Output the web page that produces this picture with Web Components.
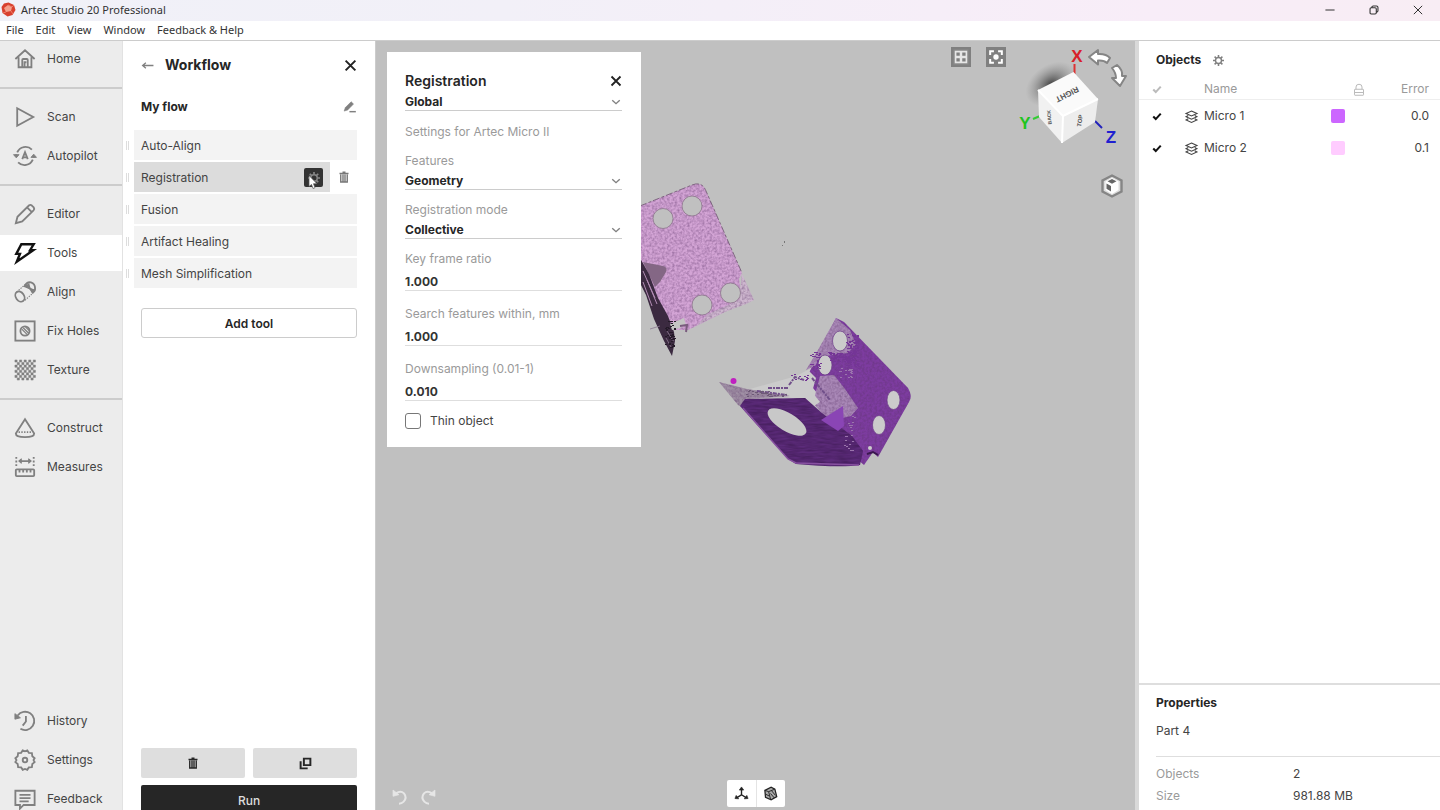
<!DOCTYPE html>
<html lang="en">
<head>
<meta charset="utf-8">
<title>Artec Studio 20 Professional</title>
<style>
    :root {
        --text: #444;
        --strong: #262626;
        --muted: #9a9a9a;
        --icon: #808080;
        --line: #dedede;
        --row: #f3f3f3;
        --row-active: #dcdcdc;
        --canvas: #c0c0c0;
        --ui-font: Inter, "Liberation Sans", sans-serif;
        --system-font: "Noto Sans", "Open Sans", sans-serif;
    }
    html, body {
        height: 100%;
        margin: 0;
        overflow: hidden;
        background: #fff;
        color: var(--text);
        font: 12px/16px var(--ui-font);
    }
</style>
</head>
<body>
<studio-app></studio-app>

<script>
const ICONS = {
    home: '<path d="M1.500 12 12 2.500 22.500 12M5 10v11h14V10M9 21v-8q0-1 1-1h4q1 0 1 1v8M11.500 21v-5.500h2"/>',
    scan: '<path d="M3.500 2.500v19L21 12Z"/>',
    autopilot: '<path d="M3.500 8a9.800 9.800 0 0 1 16-3M20.500 16a9.800 9.800 0 0 1-16 3M2.300 10v2M21.700 12v2"/><path d="m9 15.500 3-7.500 3 7.500M10 13.500h4"/><path d="m-.5 10.500 3 3.500 3-3.500ZM24.500 13.500l-3-3.500-3 3.500Z" fill="currentColor" stroke-width="1"/>',
    editor: '<path d="m2 22 1.800-7L16.500 2.500q1.500-1 3 .3l2 2q1.200 1.700-.2 3.200L9 20ZM14.500 5l4.700 4.700"/>',
    tools: '<path d="M8 2.500h13.500l-4 6.500h3.500L3 21.500l3.500-8.500H2.500Z" stroke-width="2.600"/>',
    align: '<ellipse cx="6.500" cy="17" rx="4.500" ry="6" transform="rotate(-35 6.500 17)"/><path d="M3 12 13 3M12 21l10-9" stroke-width="1.200" stroke-dasharray="1.500 1.300"/><path d="M12 5Q14 .8 18.500 1.500q4.500 1.500 4.500 6.500 0 3.500-2.500 4.500-1-3.500-4-5T12 5Z"/><path d="m12 6 4-2 1 4ZM18 9l4 1-2 2Z" fill="currentColor"/>',
    holes: '<rect x="1.500" y="1.500" width="21" height="21"/><circle cx="12" cy="12" r="5"/><path d="m8.500 10 6 6M10 8.500l6 6M12.500 7.500l4 4" stroke-width="1.400"/>',
    construct: '<path d="M12 2.500 2 18q0 4 10 4t10-4Z"/><path d="M5 16.500h14" stroke-dasharray="1.500 1.500"/>',
    measures: '<rect x="2" y="14.500" width="20" height="7.500" rx="1"/><path d="M6 15v3M10 15v3M14 15v3M18 15v3M5.500 5.500h13"/><path d="m8 3-3 2.500L8 8ZM16 3l3 2.500L16 8Z" fill="currentColor" stroke-width="1"/><path d="M2.500 1v11M21.500 1v11" stroke-dasharray="2 2"/>',
    history: '<path d="M4 6A10 10 0 1 1 7 20.500"/><path d="M1 4v6l6-1.500Z" fill="currentColor" stroke-width="1"/><path d="M13 6.500v6L9.500 17"/>',
    settings: '<path d="m9.500 1.500 2.500 1 2.500-1 1.700 2.700 3.300.3.500 3.500 2.500 2-1.200 2 1.200 2.300-2.500 2-.5 3.400-3.300.4-1.700 2.600-2.500-1-2.500 1-1.700-2.600-3.300-.4-.5-3.400-2.500-2L2.700 12 1.500 10 4 8l.5-3.500 3.300-.3Z"/><circle cx="12" cy="12" r="2.500"/>',
    feedback: '<path d="M1.500 3h21v15.500h-12L6.500 22.500v-4h-5Z"/><path d="M6 7.500h12M6 11h12M6 14.500h10"/>',
    close: '<path d="m3 3 18 18M21 3 3 21" stroke-width="3.600"/>',
    back: '<path d="M23 12H3M9 7l-6 5 6 5" stroke-width="2.400"/>',
    rename: '<path d="m2 19 2-6L14 3l4 4L8 17Z" fill="currentColor" stroke-width="1"/><path d="M11 20h11" stroke-width="2.500"/>',
    trash: '<path d="M3 5h18M9 2.500h6M5.500 7v15h13V7M10 7v14M14 7v14" stroke-width="2.800"/>',
    copy: '<path d="M9 3h12v12H9Z" stroke-width="3.600"/><path d="M3 8v13h13" stroke-width="3.600"/>',
    gear: '<circle cx="12" cy="12" r="6.500" stroke-width="3"/><path d="M12 0v5M12 19v5M0 12h5M19 12h5M3.500 3.500l3.500 3.500M17 17l3.500 3.500M3.500 20.500l3.500-3.500M17 7l3.500-3.500" stroke-width="3.400"/>',
    chevron: '<path d="m3 8 9 8 9-8" stroke-width="3.400"/>',
    tick: '<path d="m3 11 6 6L21 4" stroke-width="5"/>',
    lock: '<rect x="3" y="10.500" width="18" height="12" rx="1"/><path d="M6 10.500V6q0-5.500 6-5.500T18 6v4.500M3 17h18"/>',
    layers: '<path d="M12 2 22 6.500 12 11 2 6.500ZM6 10l-4 2.500L12 17l10-4.500L18 10M6 16l-4 2.500L12 23l10-4.500-4-2.500" stroke-width="2.100"/>',
    minimize: '<path d="M1 12h22" stroke-width="2.400"/>',
    restore: '<path d="M2.500 9q0-2.500 3-2.500h9q3 0 3 3v9q0 3-3 3h-9q-3 0-3-3ZM7 6V5q0-2.500 3-2.500h8q3.500 0 3.500 3.500v8q0 3-3 3" stroke-width="2.600"/>',
    exit: '<path d="m2 2 20 20M22 2 2 22" stroke-width="2.400"/>',
    grid: '<path d="M1.500 1.500h21v21h-21Z" fill="#8c8c8c" stroke="#808080" stroke-width="3"/><path d="M4.500 4.500h15v15h-15Z" fill="#e6e6e6" stroke="none"/><path d="M6.500 6.500h4v4h-4ZM13.500 6.500h4v4h-4ZM6.500 13.500h4v4h-4ZM13.500 13.500h4v4h-4Z" fill="#808080" stroke="none"/>',
    focus: '<path d="M1.500 1.500h21v21h-21Z" fill="#808080" stroke="#808080" stroke-width="3"/><path d="M5 9.500V5h4.500M14.500 5H19v4.500M19 14.500V19h-4.500M9.500 19H5v-4.500" stroke="#fff" stroke-width="2.400"/><circle cx="12" cy="12" r="3.200" fill="#fff" stroke="none"/>',
    viewcube: '<path d="m12 1.500 9.500 5v11L12 22.500l-9.500-5v-11Z" fill="#ddd" stroke="#858585" stroke-width="2.400"/><path d="m12 4 6.500 3.500v8.500L12 20l-6.500-4V7.500Z" fill="#fff" stroke="none"/><path d="m12 5 4.500 2.300-4.500 2.500-4.500-2.500ZM6.500 9.500l4.500 2.400v5.500l-4.500-2.700Z" fill="#666" stroke="none"/>',
    undo: '<path d="M6 6.500q7-5 12 0 5 6.500-.5 12.500-3 3-7 3" stroke-width="3"/><path d="M1.500 1.500v9.500l9-2.500Z" fill="currentColor" stroke-width="1"/>',
    axes: '<path d="M12 4v10l-8 5M12 14l8 5" stroke-width="2.200"/><path d="m8.500 6.500 3.500-5 3.500 5ZM1.500 20l2-5 4 5.500ZM22.500 20l-2-5-4 5.500Z" fill="currentColor" stroke-width="1"/>',
    mesh: '<path d="m3 7 10-5 6 3 3 12-9 5-9-4Z" fill="#aaa"/><path d="m3 7 6 2 3 12M9 9l10-4M12 12l6 7M14 8l6 7M4 13l6 3" stroke-width="1.500"/>'
};

class UiIcon extends HTMLElement {
    connectedCallback() {
        const size = this.getAttribute('size') || 20;
        const root = this.attachShadow({ mode: 'open' });
        root.innerHTML = `
            <style>
                :host { display: inline-flex; flex: none; }
                svg { display: block; }
            </style>
            <svg width="${size}" height="${size}" viewBox="0 0 24 24" fill="none" stroke="currentColor"
                stroke-width="2" overflow="visible" aria-hidden="true">${ICONS[this.getAttribute('name')]}</svg>
        `;
    }
}

class TitleBar extends HTMLElement {
    constructor() {
        super();
        this.attachShadow({ mode: 'open' }).innerHTML = `
            <style>
                :host {
                    display: flex;
                    align-items: center;
                    box-sizing: border-box;
                    height: 21px;
                    padding: 0 14px 2px 1px;
                    background: linear-gradient(90deg, #f0f1f8 0%, #f2f0f8 35%, #f8edf8 80%, #f8edf4 100%);
                    color: #333;
                    font: 11px/18px var(--system-font);
                }
                .name { flex: 1; padding-left: 5px; }
                .buttons { display: flex; gap: 28px; }
                button {
                    display: flex;
                    justify-content: center;
                    width: 16px;
                    padding: 0;
                    border: 0;
                    background: none;
                    color: #333;
                }
            </style>
            <svg width="15" height="15" viewBox="0 0 15 15" aria-hidden="true">
                <path d="M7.500.5 13 3l1.500 5-3 5-5 1.500L1.500 11 .5 5 3 1.500Z" fill="#d8412f"/>
                <path d="M7 3 11 5l-1 4-5 1-2-4Z" fill="#f4a08c"/>
                <path d="m7 3 4 2 2-2M5 10l-3 1M10 9l2 3" stroke="#ee7d68" fill="none"/>
            </svg>
            <span class="name"><slot></slot></span>
            <div class="buttons">
                <button aria-label="Minimize"><ui-icon name="minimize" size="10"></ui-icon></button>
                <button aria-label="Restore"><ui-icon name="restore" size="10"></ui-icon></button>
                <button aria-label="Close"><ui-icon name="exit" size="10"></ui-icon></button>
            </div>
        `;
    }
}

class MenuBar extends HTMLElement {
    constructor() {
        super();
        this.attachShadow({ mode: 'open' }).innerHTML = `
            <style>
                :host {
                    display: flex;
                    align-items: flex-start;
                    gap: 12px;
                    height: 19px;
                    padding: 0 6px;
                    border-bottom: 1px solid #ccc;
                    background: #fff;
                }
                button {
                    padding: 0;
                    border: 0;
                    background: none;
                    color: #333;
                    font: 11px/18px var(--system-font);
                }
            </style>
            <button>File</button>
            <button>Edit</button>
            <button>View</button>
            <button>Window</button>
            <button>Feedback &amp; Help</button>
        `;
    }
}

class NavItem extends HTMLElement {
    connectedCallback() {
        this.attachShadow({ mode: 'open' }).innerHTML = `
            <style>
                :host { display: block; }
                button {
                    display: flex;
                    align-items: center;
                    gap: 11px;
                    width: 100%;
                    height: 36px;
                    padding: 0 0 0 14px;
                    border: 0;
                    background: none;
                    color: var(--text);
                    font: inherit;
                }
                ui-icon { color: var(--icon); }
                :host([active]) button { background: #fff; }
                :host([active]) ui-icon { color: #111; }
            </style>
            <button><ui-icon name="${this.getAttribute('icon')}" size="22"></ui-icon><slot></slot></button>
        `;
    }
}

class SideNav extends HTMLElement {
    constructor() {
        super();
        this.attachShadow({ mode: 'open' }).innerHTML = `
            <style>
                :host {
                    display: flex;
                    flex-direction: column;
                    justify-content: space-between;
                    width: 122px;
                    padding-bottom: 9px;
                    border-right: 1px solid #e2e2e2;
                    background: #ececec;
                    flex: none;
                }
                nav { display: flex; flex-direction: column; gap: 3px; }
                hr {
                    width: 100%;
                    height: 2px;
                    margin: 7px 0;
                    border: 0;
                    background: #ccc;
                }
            </style>
            <nav>
                <nav-item icon="home">Home</nav-item>
                <hr>
                <nav-item icon="scan">Scan</nav-item>
                <nav-item icon="autopilot">Autopilot</nav-item>
                <hr>
                <nav-item icon="editor">Editor</nav-item>
                <nav-item icon="tools" active>Tools</nav-item>
                <nav-item icon="align">Align</nav-item>
                <nav-item icon="holes">Fix Holes</nav-item>
                <nav-item icon="texture">Texture</nav-item>
                <hr>
                <nav-item icon="construct">Construct</nav-item>
                <nav-item icon="measures">Measures</nav-item>
            </nav>
            <nav>
                <nav-item icon="history">History</nav-item>
                <nav-item icon="settings">Settings</nav-item>
                <nav-item icon="feedback">Feedback</nav-item>
            </nav>
        `;
    }
}

// One step of the flow; the active one shows its settings and delete buttons
class FlowStep extends HTMLElement {
    connectedCallback() {
        const active = this.hasAttribute('active');
        this.attachShadow({ mode: 'open' }).innerHTML = `
            <style>
                :host { display: flex; align-items: center; height: 30px; }
                .handle {
                    width: 1px;
                    height: 9px;
                    margin: 0 5px 0 3px;
                    border: solid #ddd;
                    border-width: 0 1px;
                }
                .body {
                    display: flex;
                    flex: 1;
                    align-items: center;
                    justify-content: space-between;
                    box-sizing: border-box;
                    height: 30px;
                    padding: 1px 7px 0;
                    background: var(--row);
                }
                :host([active]) .body { background: var(--row-active); }
                button {
                    display: grid;
                    place-items: center;
                    padding: 0;
                    border: 0;
                    background: none;
                    color: #777;
                }
                .gear {
                    position: relative;
                    width: 19px;
                    height: 19px;
                    border-radius: 2px;
                    background: #333;
                    color: #888;
                }
                .cursor { position: absolute; left: 4px; top: 7px; }
                .trash { width: 27px; }
            </style>
            <span class="handle"></span>
            <div class="body">
                <slot></slot>
                ${active ? `<button class="gear" aria-label="Step settings">
                    <ui-icon name="gear" size="12"></ui-icon>
                    <svg class="cursor" width="10" height="14" viewBox="0 0 10 14" aria-hidden="true">
                        <path d="M1 .5v11l2.500-2 1.500 4 2-.8-1.500-4H9Z" fill="#fff" stroke="#555" stroke-width=".7"/>
                    </svg>
                </button>` : ''}
            </div>
            ${active ? '<button class="trash" aria-label="Delete step"><ui-icon name="trash" size="12"></ui-icon></button>' : ''}
        `;
    }
}

class WorkflowPanel extends HTMLElement {
    constructor() {
        super();
        this.attachShadow({ mode: 'open' }).innerHTML = `
            <style>
                :host {
                    display: flex;
                    flex-direction: column;
                    flex: none;
                    width: 252px;
                    border-right: 1px solid #ccc;
                    background: #fff;
                }
                header, .flow {
                    display: flex;
                    align-items: center;
                    padding: 0 18px;
                }
                header { gap: 11px; height: 48px; }
                h1 {
                    flex: 1;
                    margin: 0;
                    color: var(--strong);
                    font-size: 14px;
                    font-weight: 700;
                }
                .flow { justify-content: space-between; height: 36px; }
                h2 {
                    margin: 0;
                    color: var(--strong);
                    font-size: 12px;
                    font-weight: 700;
                }
                button {
                    padding: 0;
                    border: 0;
                    background: none;
                    color: var(--strong);
                    font: inherit;
                }
                .plain { display: flex; color: var(--icon); }
                .plain.dark { color: #222; }
                .steps {
                    display: flex;
                    flex-direction: column;
                    gap: 2px;
                    padding: 5px 18px 20px 0;
                }
                .add {
                    height: 30px;
                    margin: 0 18px;
                    padding-top: 1px;
                    border: 1px solid #ccc;
                    border-radius: 3px;
                    font-weight: 600;
                }
                footer {
                    display: grid;
                    grid-template-columns: 1fr 1fr;
                    gap: 7px 8px;
                    margin-top: auto;
                    padding: 0 18px 11px;
                }
                footer button {
                    display: grid;
                    place-items: center;
                    height: 30px;
                    border-radius: 2px;
                    background: #dedede;
                }
                footer .run {
                    grid-column: span 2;
                    padding-top: 1px;
                    background: #262626;
                    color: #ddd;
                    font-weight: 500;
                }
            </style>
            <header>
                <button class="plain" aria-label="Back"><ui-icon name="back" size="13"></ui-icon></button>
                <h1>Workflow</h1>
                <button class="plain dark" aria-label="Close"><ui-icon name="close" size="13"></ui-icon></button>
            </header>
            <div class="flow">
                <h2>My flow</h2>
                <button class="plain" aria-label="Rename flow"><ui-icon name="rename" size="14"></ui-icon></button>
            </div>
            <div class="steps">
                <flow-step>Auto-Align</flow-step>
                <flow-step active>Registration</flow-step>
                <flow-step>Fusion</flow-step>
                <flow-step>Artifact Healing</flow-step>
                <flow-step>Mesh Simplification</flow-step>
            </div>
            <button class="add">Add tool</button>
            <footer>
                <button aria-label="Delete flow"><ui-icon name="trash" size="12"></ui-icon></button>
                <button aria-label="Duplicate flow"><ui-icon name="copy" size="13"></ui-icon></button>
                <button class="run">Run</button>
            </footer>
        `;
    }
}

class SelectField extends HTMLElement {
    connectedCallback() {
        const label = this.getAttribute('label');
        this.attachShadow({ mode: 'open' }).innerHTML = `
            <style>
                :host { display: block; }
                label { display: block; height: 20px; color: var(--muted); }
                .box {
                    display: grid;
                    align-items: center;
                    grid-template-columns: 1fr 11px;
                    border-bottom: 1px solid #ccc;
                }
                select {
                    grid-area: 1 / 1 / 2 / 3;
                    width: 100%;
                    height: 16px;
                    padding: 0;
                    border: 0;
                    appearance: none;
                    background: none;
                    color: var(--strong);
                    font: 700 12px/16px var(--ui-font);
                }
                ui-icon { grid-area: 1 / 2; color: var(--icon); pointer-events: none; }
            </style>
            ${label ? `<label for="value">${label}</label>` : ''}
            <div class="box">
                <select id="value" ${label ? '' : 'aria-label="Registration type"'}>
                    <option>${this.getAttribute('value')}</option>
                </select>
                <ui-icon name="chevron" size="10"></ui-icon>
            </div>
        `;
    }
}

class NumberField extends HTMLElement {
    connectedCallback() {
        this.attachShadow({ mode: 'open' }).innerHTML = `
            <style>
                :host { display: block; }
                label { display: block; height: 22px; color: var(--muted); }
                input {
                    display: block;
                    box-sizing: border-box;
                    width: 100%;
                    height: 18px;
                    padding: 0 0 1px;
                    border: 0;
                    border-bottom: 1px solid var(--line);
                    background: none;
                    color: #333;
                    font: 700 12px/16px var(--ui-font);
                }
            </style>
            <label for="value">${this.getAttribute('label')}</label>
            <input id="value" value="${this.getAttribute('value')}">
        `;
    }
}

class RegistrationDialog extends HTMLElement {
    constructor() {
        super();
        this.attachShadow({ mode: 'open' }).innerHTML = `
            <style>
                :host {
                    display: flex;
                    flex-direction: column;
                    box-sizing: border-box;
                    width: 254px;
                    padding: 19px 19px 18px 18px;
                    background: #fff;
                }
                header {
                    display: flex;
                    align-items: center;
                    justify-content: space-between;
                    margin-bottom: 3px;
                }
                h2 {
                    margin: 0;
                    color: var(--strong);
                    font-size: 14px;
                    line-height: 20px;
                    font-weight: 600;
                }
                button { display: flex; padding: 0; border: 0; background: none; color: #222; }
                p { margin: 13px 0; color: var(--muted); }
                .fields { display: flex; flex-direction: column; gap: 12px; }
                number-field + number-field { margin-top: 3px; }
                .check { display: flex; align-items: center; gap: 9px; }
                .check input {
                    width: 16px;
                    height: 16px;
                    margin: 0;
                    border: 1px solid #777;
                    border-radius: 3px;
                    appearance: none;
                    background: #fff;
                }
            </style>
            <header>
                <h2>Registration</h2>
                <button aria-label="Close"><ui-icon name="close" size="12"></ui-icon></button>
            </header>
            <select-field value="Global"></select-field>
            <p>Settings for Artec Micro II</p>
            <div class="fields">
                <select-field label="Features" value="Geometry"></select-field>
                <select-field label="Registration mode" value="Collective"></select-field>
                <number-field label="Key frame ratio" value="1.000"></number-field>
                <number-field label="Search features within, mm" value="1.000"></number-field>
                <number-field label="Downsampling (0.01-1)" value="0.010"></number-field>
                <div class="check">
                    <input type="checkbox" id="thin">
                    <label for="thin">Thin object</label>
                </div>
            </div>
        `;
    }
}

class ScanModel extends HTMLElement {
    constructor() {
        super();
        this.attachShadow({ mode: 'open' }).innerHTML = `
            <style>
                :host { display: block; }
                svg { display: block; }
            </style>
            <svg width="290" height="300" viewBox="640 170 290 300" role="img" aria-label="Scanned brackets">
                <defs>
                    <filter id="grain" x="0" y="0" width="1" height="1" color-interpolation-filters="sRGB">
                        <feTurbulence type="fractalNoise" baseFrequency=".4" numOctaves="2" seed="4" result="n"/>
                        <feColorMatrix in="n" values="0 0 0 0 .35  0 0 0 0 .2  0 0 0 0 .4  .8 0 0 0 -.28" result="d"/>
                        <feComposite in="d" in2="SourceGraphic" operator="in" result="g"/>
                        <feMerge><feMergeNode in="SourceGraphic"/><feMergeNode in="g"/></feMerge>
                    </filter>
                    <filter id="streak" x="0" y="0" width="1" height="1" color-interpolation-filters="sRGB">
                        <feTurbulence type="fractalNoise" baseFrequency=".08 .5" numOctaves="2" seed="8" result="n"/>
                        <feColorMatrix in="n" values="0 0 0 0 .2  0 0 0 0 .08  0 0 0 0 .27  .9 0 0 0 -.25" result="d"/>
                        <feComposite in="d" in2="SourceGraphic" operator="in" result="g"/>
                        <feMerge><feMergeNode in="SourceGraphic"/><feMergeNode in="g"/></feMerge>
                    </filter>
                </defs>

                <g filter="url(#grain)">
                    <path d="M640 206 692 185q10-4 14 6l36 82-3 6 4 24-55 27-14 0-34-60Z" fill="#d3a4d5"/>
                    <path d="m742 274 12 26-8 4-24 9-26 13 12-12 31-14Z" fill="#cdb6ce"/>
                </g>
                <path d="M640 206 692 185q10-4 14 6l36 82" fill="none" stroke="#6d5570" stroke-dasharray="7 2 3 2" stroke-width=".8"/>
                <g fill="#c0c0c0" stroke="#8b758c" stroke-width=".8">
                    <circle cx="663" cy="218.500" r="10"/>
                    <circle cx="692" cy="206" r="10"/>
                    <circle cx="702" cy="305" r="10"/>
                    <circle cx="730.500" cy="293" r="10"/>
                </g>
                <path d="m643 262 20 4q5 1 3 6l-6 10-5 5Z" fill="#846785"/>
                <path d="m640 258 9 16 9 24 10 18 6 16 1 9-3 15-8-15-10-22-8-24-6-12Z" fill="#3b2a40"/>
                <path d="m643 271 12 27M643 282l9 24M647 280l10 24" stroke="#b28cb4" fill="none"/>
                <path d="m670 324 14-6 2 7-6 3-8 2Z" fill="#c4c4c4"/>
                <path d="m680 326 7-1-1 7" stroke="#7a5c7e" stroke-width="2" fill="none"/>
                <path d="M650 329l10-3M672 342l3-4M666 338l5 9M667 331l5 8" stroke="#8c7890" stroke-width=".8"/>
                <path d="M784 241h1v2h-1ZM782 245h1v1h-1Z" fill="#777"/>

                <path d="m750 389 50-14 10-6 10-12 14 20 8 34-30-5-20-8Z" fill="#cbcbcb"/>
                <g filter="url(#grain)">
                    <path d="m836 318 8 4 64 66q5 8 1 14l-31 55-5-5-9 13-14-12-22-46-22-28Z" fill="#7d3ca0"/>
                    <path d="m836 318 14 12 6 14-8 9-16 2-12 2-5 9-9 4 12-20Z" fill="#a988b7"/>
                    <path d="m820 376 14-1 11 14 13 19-7 8-22 5-16-18Z" fill="#a988b7"/>
                    <path d="m719 382 28 7 43 7-40 3-5 10-7-4Z" fill="#9f8fa4"/>
                </g>
                <path d="m790 379 18-9 8 8-4 14 8 10-6 4-12-8-12-4Z" fill="#cbcbcb"/>
                <g filter="url(#streak)">
                    <path d="m745 399 60-1 17 15 30 23 11 15-3 14q-18 3-64-1l-8-5-48-53Z" fill="#5c2b7a"/>
                </g>
                <path d="m743 408 45 51 8 4 63 2" fill="none" stroke="#8750a0" stroke-width="1.500"/>
                <path d="m821 420 22-14 1 20-6 5Z" fill="#8a45b5"/>
                <path d="m812 378 18 22M789 385l6-8 9 3M757 391l30 4M768 388h20" stroke="#71508a" stroke-width="2" stroke-dasharray="4 1 2 1" fill="none"/>
                <ellipse cx="787" cy="422" rx="22" ry="9" transform="rotate(31 787 422)" fill="#c8c8c8"/>
                <g fill="#cbcbcb" stroke="#6a3987" stroke-width=".7">
                    <ellipse cx="840" cy="341" rx="7.500" ry="10"/>
                    <ellipse cx="825" cy="365" rx="7" ry="10"/>
                    <ellipse cx="893.500" cy="400" rx="6.500" ry="9.500"/>
                    <ellipse cx="879" cy="425" rx="6.500" ry="9.500"/>
                </g>
                <circle cx="870" cy="448" r="2" fill="#ccc"/>
                <path d="m867 454 6-2 5 3" stroke="#3b174f" stroke-width="2" fill="none"/>
                <g id="specks"></g>
                <circle cx="733.500" cy="381" r="3" fill="#c020c0"/>
            </svg>
        `;
        this.scatter();
    }

    // Loose points along the borders where the two scans overlap
    scatter() {
        const areas = [
            [846, 334, 12, 34, '#743596', 90],
            [828, 352, 26, 10, '#743596', 60],
            [810, 352, 10, 20, '#743596', 30],
            [838, 368, 14, 10, '#9a74ac', 16],
            [844, 408, 10, 44, '#9a74ac', 28],
            [790, 374, 20, 6, '#743596', 14],
            [742, 390, 46, 7, '#6d5a76', 30],
            [665, 320, 9, 28, '#241a28', 44]
        ];
        let seed = 7;
        const random = () => (seed = (seed * 16807) % 2147483647) / 2147483647;
        this.shadowRoot.querySelector('#specks').innerHTML = areas.map(([x, y, w, h, fill, count]) => {
            let d = '';
            for (let i = 0; i < count; i++) {
                d += `M${Math.round(x + random() * w)} ${Math.round(y + random() * h)}h2v1h-2Z`;
            }
            return `<path d="${d}" fill="${fill}"/>`;
        }).join('');
    }
}

class NavCube extends HTMLElement {
    constructor() {
        super();
        this.attachShadow({ mode: 'open' }).innerHTML = `
            <style>
                :host { display: block; }
                svg { display: block; font-family: "Liberation Sans", sans-serif; }
            </style>
            <svg width="114" height="106" viewBox="1016 44 114 106" role="img" aria-label="View cube">
                <defs>
                    <radialGradient id="shade">
                        <stop offset="0" stop-color="#444"/>
                        <stop offset="1" stop-color="#888" stop-opacity="0"/>
                    </radialGradient>
                </defs>
                <ellipse cx="1051" cy="84" rx="28" ry="19" transform="rotate(-35 1051 84)" fill="url(#shade)"/>
                <path d="M1074.500 74V64" stroke="#d33" stroke-width="2"/>
                <path d="m1033 119 7-3" stroke="#3c3" stroke-width="2"/>
                <path d="m1095 121 7 7" stroke="#22b" stroke-width="2"/>
                <path d="m1073.500 72 24.500 27-35 17-25-26Z" fill="#fafafa"/>
                <path d="m1038 90 25 26-1 27-23-26Z" fill="#f1f1f1"/>
                <path d="m1063 116 35-17-3 23-33 21Z" fill="#ededed"/>
                <path d="m1038 90 25 26 35-17M1063 116l-1 27" stroke="#fff" stroke-width="2" fill="none"/>
                <g fill="#555" font-size="8" font-weight="700" text-anchor="middle">
                    <text transform="translate(1066 92) rotate(153)">RIGHT</text>
                    <text transform="translate(1051 117) rotate(-95)" font-size="5">BACK</text>
                    <text transform="translate(1082 121) rotate(-80)" font-size="6">TOP</text>
                </g>
                <g font-size="17" font-weight="700" text-anchor="middle">
                    <text x="1077" y="62" fill="#d8202a">X</text>
                    <text x="1025" y="129" fill="#1fc41f">Y</text>
                    <text x="1111" y="143" fill="#2020d0">Z</text>
                </g>
                <g fill="#fff" stroke="#858585" stroke-width="2" stroke-linejoin="round">
                    <path d="m1089 57 9-7v4q8-.5 12 4l-3 5q-3-3-9-2.500v4Z"/>
                    <path d="m1112 68 5-3q6 5 5 11h4l-6 10-8-8h4q0-5-4-10Z"/>
                </g>
            </svg>
        `;
    }
}

class SceneView extends HTMLElement {
    constructor() {
        super();
        this.attachShadow({ mode: 'open' }).innerHTML = `
            <style>
                :host {
                    display: flex;
                    flex: 1;
                    flex-direction: column;
                    justify-content: space-between;
                    position: relative;
                    min-width: 0;
                    overflow: hidden;
                    background: var(--canvas);
                }
                scan-model { position: absolute; left: 264px; top: 129px; }
                registration-dialog { position: absolute; left: 11px; top: 11px; }
                .tools {
                    display: flex;
                    justify-content: end;
                    padding: 3px 5px 0 0;
                }
                button { display: flex; padding: 0; border: 0; background: none; }
                .modes { display: flex; align-items: start; gap: 15px; padding: 3px 10px; }
                .cube { display: flex; flex-direction: column; align-items: end; gap: 24px; }
                .cube button { margin-right: 6px; }
                .bottom {
                    display: grid;
                    grid-template-columns: 1fr auto 1fr;
                    align-items: center;
                    padding: 0 16px 19px;
                }
                .undo { display: flex; gap: 12px; padding-top: 6px; color: #e6e6e6; }
                .undo button { color: inherit; }
                .redo { transform: scaleX(-1); }
                .display { display: flex; border-radius: 2px; background: #fff; }
                .display button {
                    justify-content: center;
                    align-items: center;
                    width: 29px;
                    height: 27px;
                    color: #222;
                }
                .display button + button { border-left: 1px solid #e4e4e4; }
            </style>
            <scan-model></scan-model>
            <div class="tools">
                <div class="modes">
                    <button aria-label="Layout"><ui-icon name="grid" size="20"></ui-icon></button>
                    <button aria-label="Fit to view"><ui-icon name="focus" size="20"></ui-icon></button>
                </div>
                <div class="cube">
                    <nav-cube></nav-cube>
                    <button aria-label="Projection"><ui-icon name="viewcube" size="24"></ui-icon></button>
                </div>
            </div>
            <div class="bottom">
                <div class="undo">
                    <button aria-label="Undo"><ui-icon name="undo" size="16"></ui-icon></button>
                    <button class="redo" aria-label="Redo"><ui-icon name="undo" size="16"></ui-icon></button>
                </div>
                <div class="display">
                    <button aria-label="Axes"><ui-icon name="axes" size="15"></ui-icon></button>
                    <button aria-label="Mesh"><ui-icon name="mesh" size="15"></ui-icon></button>
                </div>
            </div>
            <registration-dialog></registration-dialog>
        `;
    }
}

class ObjectsPanel extends HTMLElement {
    constructor() {
        super();
        this.attachShadow({ mode: 'open' }).innerHTML = `
            <style>
                :host { display: flex; flex-direction: column; flex: 1; }
                header {
                    display: flex;
                    align-items: center;
                    gap: 12px;
                    height: 38px;
                    padding-left: 17px;
                }
                h2 { margin: 0; color: var(--strong); font-size: 12px; font-weight: 700; }
                header button { display: flex; padding: 0; border: 0; background: none; color: var(--icon); }
                table { width: 100%; border-collapse: collapse; table-layout: fixed; }
                th, td { height: 32px; padding: 0; font-weight: 400; text-align: left; }
                th { height: 20px; border-bottom: 1px solid #eee; color: var(--muted); }
                tr > :first-child { width: 46px; padding-left: 13px; box-sizing: border-box; }
                tr > :nth-child(2) { width: 19px; }
                tr > :nth-child(4) { width: 56px; text-align: center; }
                tr > :nth-child(5) { width: 53px; padding-right: 11px; box-sizing: border-box; text-align: right; }
                ui-icon { vertical-align: middle; }
                th ui-icon { color: #bbb; }
                td:first-child { color: #111; }
                .swatch {
                    display: block;
                    width: 14px;
                    height: 14px;
                    border-radius: 2px;
                }
            </style>
            <header>
                <h2>Objects</h2>
                <button aria-label="Objects settings"><ui-icon name="gear" size="11"></ui-icon></button>
            </header>
            <table>
                <thead>
                    <tr>
                        <th><ui-icon name="tick" size="10"></ui-icon></th>
                        <th></th>
                        <th>Name</th>
                        <th><ui-icon name="lock" size="12"></ui-icon></th>
                        <th>Error</th>
                    </tr>
                </thead>
                <tbody>
                    <tr>
                        <td><ui-icon name="tick" size="10"></ui-icon></td>
                        <td><ui-icon name="layers" size="13"></ui-icon></td>
                        <td>Micro 1</td>
                        <td><span class="swatch" style="background: #cc66ff"></span></td>
                        <td>0.0</td>
                    </tr>
                    <tr>
                        <td><ui-icon name="tick" size="10"></ui-icon></td>
                        <td><ui-icon name="layers" size="13"></ui-icon></td>
                        <td>Micro 2</td>
                        <td><span class="swatch" style="background: #ffccff"></span></td>
                        <td>0.1</td>
                    </tr>
                </tbody>
            </table>
        `;
    }
}

class PropertiesPanel extends HTMLElement {
    constructor() {
        super();
        this.attachShadow({ mode: 'open' }).innerHTML = `
            <style>
                :host {
                    display: block;
                    padding: 10px 0 22px 17px;
                    border-top: 2px solid var(--line);
                }
                h2 { margin: 0; color: var(--strong); font-size: 12px; font-weight: 700; }
                p { margin: 12px 0 17px; }
                dl {
                    display: grid;
                    grid-template-columns: 137px 1fr;
                    gap: 6px 0;
                    margin: 0;
                    padding-top: 9px;
                    border-top: 1px solid var(--line);
                }
                dt { color: var(--muted); }
                dd { margin: 0; }
            </style>
            <h2>Properties</h2>
            <p>Part 4</p>
            <dl>
                <dt>Objects</dt><dd>2</dd>
                <dt>Size</dt><dd>981.88 MB</dd>
            </dl>
        `;
    }
}

class StudioApp extends HTMLElement {
    constructor() {
        super();
        this.attachShadow({ mode: 'open' }).innerHTML = `
            <style>
                /* the window reaches a little below the screen edge */
                :host {
                    display: grid;
                    grid-template-rows: auto auto 1fr;
                    height: calc(100vh + 16px);
                }
                main { display: flex; min-height: 0; }
                aside {
                    display: flex;
                    flex-direction: column;
                    flex: none;
                    width: 301px;
                    border-left: 4px solid #d9d9d9;
                    background: #fff;
                }
            </style>
            <title-bar>Artec Studio 20 Professional</title-bar>
            <menu-bar></menu-bar>
            <main>
                <side-nav></side-nav>
                <workflow-panel></workflow-panel>
                <scene-view></scene-view>
                <aside>
                    <objects-panel></objects-panel>
                    <properties-panel></properties-panel>
                </aside>
            </main>
        `;
    }
}

// Checkered texture icon
let dots = '';
for (let row = 0; row < 8; row++) {
    for (let col = row % 2; col < 9; col += 2) {
        dots += `M${col * 2.5 + 1} ${row * 2.8 + 1}h2.400v2.400h-2.400Z`;
    }
}
ICONS.texture = `<path d="${dots}" fill="currentColor" stroke-width=".5"/>`;

customElements.define('ui-icon', UiIcon);
customElements.define('title-bar', TitleBar);
customElements.define('menu-bar', MenuBar);
customElements.define('nav-item', NavItem);
customElements.define('side-nav', SideNav);
customElements.define('flow-step', FlowStep);
customElements.define('workflow-panel', WorkflowPanel);
customElements.define('select-field', SelectField);
customElements.define('number-field', NumberField);
customElements.define('registration-dialog', RegistrationDialog);
customElements.define('scan-model', ScanModel);
customElements.define('nav-cube', NavCube);
customElements.define('scene-view', SceneView);
customElements.define('objects-panel', ObjectsPanel);
customElements.define('properties-panel', PropertiesPanel);
customElements.define('studio-app', StudioApp);
</script>
</body>
</html>
